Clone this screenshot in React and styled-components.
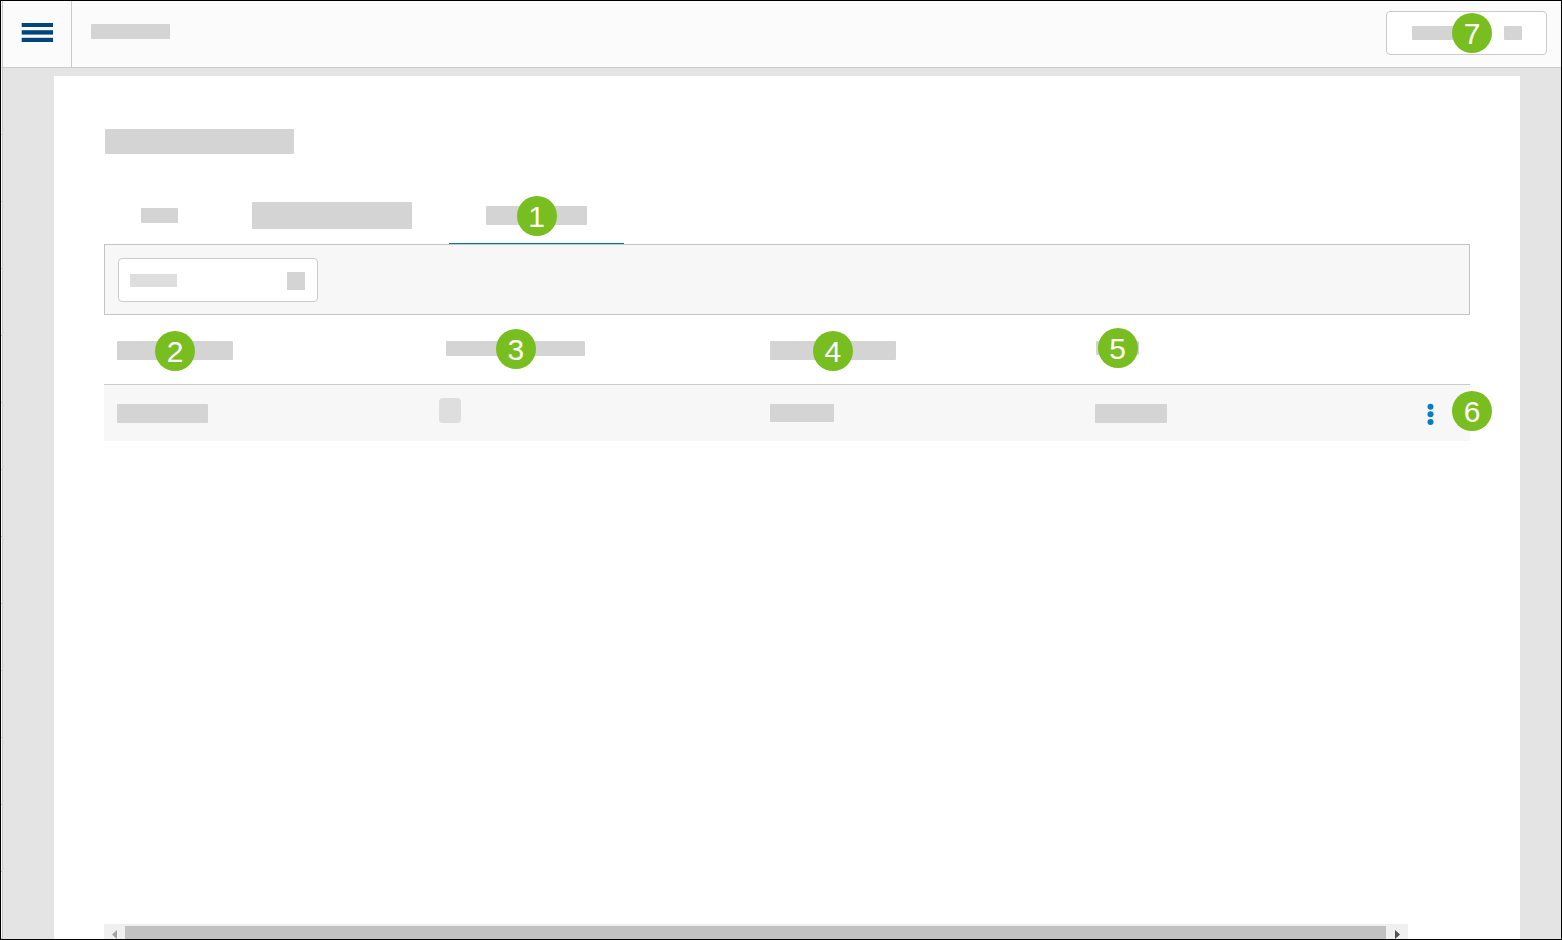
import React from "react";
import styled, { createGlobalStyle, css } from "styled-components";

const GlobalStyle = createGlobalStyle`
  *, *::before, *::after {
    box-sizing: border-box;
  }

  body {
    margin: 0;
    font-family: "Liberation Sans", Arial, sans-serif;
  }

  button {
    font: inherit;
    cursor: pointer;
  }
`

const Frame = styled.div`
  display: flex;
  height: 100vh;
  overflow: hidden;
  border: 1px solid #000;
  background-color: #e4e4e4;
`

const Rail = styled.div`
  flex: none;
  width: 2px;
  border-right: 1px solid #cbc8c7;
  background: repeating-linear-gradient(#f9f9f9 0 66px, #cbcbcb 66px 67px);
`

const Page = styled.div`
  flex: 1;
  min-width: 0;
  display: flex;
  flex-direction: column;
`

const TopBar = styled.header`
  flex: none;
  display: flex;
  align-items: flex-start;
  height: 67px;
  padding-right: 14px;
  border-bottom: 1px solid #cbcbcb;
  background-color: #fbfbfb;
`

const MenuButton = styled.button`
  display: flex;
  align-items: center;
  justify-content: center;
  width: 69px;
  height: 100%;
  padding: 0 0 2px;
  border: 0;
  border-right: 1px solid #cbcbcb;
  background: none;
`

const AppName = styled.div`
  flex: 1;
  padding: 23px 19px 0;
`

const AccountButton = styled.button`
  display: flex;
  align-items: center;
  gap: 32px;
  height: 44px;
  margin-top: 10px;
  padding: 0 24px 0 25px;
  border: 1px solid #cbcbcb;
  border-radius: 4px;
  background-color: #fff;
`

const Placeholder = styled.span`
  display: block;
  position: relative;
  width: ${props => props.$width}px;
  height: ${props => props.$height}px;
  border-radius: 1px;
  background-color: #d4d4d4;
`

const Badge = styled.span`
  position: absolute;
  top: calc(50% - 20px);
  left: calc(50% - 20px);
  width: 40px;
  height: 40px;
  border-radius: 50%;
  background-color: #78be20;
  color: #fff;
  font-size: 30px;
  font-weight: 400;
  line-height: 42px;
  text-align: center;

  ${props => props.$edge && css`
    left: calc(100% - 20px);
  `}

  ${props => props.$outside && css`
    top: 6px;
    left: auto;
    right: -22px;
  `}
`

const Main = styled.main`
  flex: 1;
  min-height: 0;
  display: flex;
  padding: 8px 41px 0 51px;
`

const Panel = styled.section`
  flex: 1;
  min-width: 0;
  display: flex;
  flex-direction: column;
  padding: 53px 50px 0;
  background-color: #fff;
`

const Title = styled.h1`
  margin: 0 0 34px;
  padding-left: 1px;
`

const Tabs = styled.div`
  display: flex;
`

const Tab = styled.button`
  display: flex;
  align-items: center;
  height: 56px;
  padding: 0 37px;
  border: 0;
  border-bottom: 1px solid ${props => props.$selected ? "#0077c0" : "transparent"};
  background: none;
`

const FilterBar = styled.div`
  padding: 13px 13px 12px;
  border: 1px solid #c4c4c4;
  background-color: #f7f7f7;
`

const FilterSelect = styled.select`
  appearance: none;
  display: block;
  width: 200px;
  height: 44px;
  border: 1px solid #cbcbcb;
  border-radius: 4px;
  background-color: #fff;
  background-image: linear-gradient(#dedede, #dedede), linear-gradient(#d4d4d4, #d4d4d4);
  background-position: left 11px top 15px, right 12px top 13px;
  background-size: 47px 13px, 18px 18px;
  background-repeat: no-repeat;
`

const Table = styled.table`
  width: 100%;
  table-layout: fixed;
  border-collapse: separate;
  border-spacing: 0;
`

const Column = styled.col`
  width: ${props => props.$width};
`

const HeadCell = styled.th`
  height: 70px;
  padding: 26px 13px 0;
  border-bottom: 1px solid #cbcbcb;
  vertical-align: top;

  ${props => props.$indent && css`
    padding-left: ${13 + props.$indent}px;
  `}
`

const Cell = styled.td`
  height: 56px;
  padding: ${props => props.$control ? 13 : 19}px 13px 0;
  background-color: #f7f7f7;
  vertical-align: top;
`

const ActionCell = styled(Cell)`
  position: relative;
  padding: 16px 34px 0 0;
`

const Checkbox = styled.input`
  appearance: none;
  display: block;
  width: 22px;
  height: 25px;
  margin: 0;
  border-radius: 4px;
  background-color: #dedede;
`

const RowMenuButton = styled.button`
  display: block;
  margin-left: auto;
  padding: 0;
  border: 0;
  background: none;

  svg {
    display: block;
  }
`

const ScrollBar = styled.div`
  display: flex;
  height: 15px;
  margin: auto 62px 0 0;
  background-color: #f0f0f0;
`

const ScrollArrow = styled.button`
  display: flex;
  flex: none;
  justify-content: ${props => props.$end ? "flex-end" : "flex-start"};
  width: ${props => props.$end ? 22 : 21}px;
  padding: 6px 8px 0;
  border: 0;
  background: none;
`

const ScrollThumb = styled.div`
  flex: 1;
  margin-top: 2px;
  background-color: #c1c1c1;
`

const columns = [
    { width: "23.6%", block: [116, 19], badge: 2 },
    { width: "24.2%", block: [139, 15], badge: 3, indent: 7 },
    { width: "23.8%", block: [126, 19], badge: 4 },
    { width: "auto", block: [43, 14], badge: 5, indent: 1 },
];

const Block = ({ size, children }) => (
    <Placeholder $width={size[0]} $height={size[1]}>{children}</Placeholder>
);

const MenuIcon = () => (
    <svg width="32" height="20" viewBox="0 0 32 20" fill="#00457c" aria-hidden="true">
        <rect x="0.7" y="0" width="31.3" height="4" />
        <rect x="0.7" y="7.2" width="31.3" height="4.4" />
        <rect x="0.7" y="14.8" width="31.3" height="4.2" />
    </svg>
);

const DotsIcon = () => (
    <svg width="11" height="26" viewBox="0 0 11 26" fill="#0a7cc1" aria-hidden="true">
        <circle cx="5.5" cy="5.7" r="3" />
        <circle cx="5.5" cy="13.3" r="3" />
        <circle cx="5.5" cy="21" r="3" />
    </svg>
);

const Header = () => (
    <TopBar>
        <MenuButton aria-label="Menu"><MenuIcon /></MenuButton>
        <AppName><Block size={[79, 15]} /></AppName>
        <AccountButton aria-label="Account">
            <Block size={[60, 14]}><Badge $edge>7</Badge></Block>
            <Block size={[18, 14]} />
        </AccountButton>
    </TopBar>
);

const DataTable = () => (
    <Table>
        <colgroup>
            {columns.map(column => <Column key={column.badge} $width={column.width} />)}
            <Column $width="60px" />
        </colgroup>
        <thead>
            <tr>
                {columns.map(column => (
                    <HeadCell key={column.badge} scope="col" $indent={column.indent}>
                        <Block size={column.block}><Badge>{column.badge}</Badge></Block>
                    </HeadCell>
                ))}
                <HeadCell as="td" />
            </tr>
        </thead>
        <tbody>
            <tr>
                <Cell><Block size={[91, 19]} /></Cell>
                <Cell $control><Checkbox type="checkbox" aria-label="Select row" /></Cell>
                <Cell><Block size={[64, 18]} /></Cell>
                <Cell><Block size={[72, 19]} /></Cell>
                <ActionCell>
                    <RowMenuButton aria-label="Row actions"><DotsIcon /></RowMenuButton>
                    <Badge $outside>6</Badge>
                </ActionCell>
            </tr>
        </tbody>
    </Table>
);

const HorizontalScroll = () => (
    <ScrollBar>
        <ScrollArrow aria-label="Scroll left">
            <svg width="5" height="9" viewBox="0 0 5 9" fill="#a3a3a3"><path d="M5 0v9L0 4.5z" /></svg>
        </ScrollArrow>
        <ScrollThumb />
        <ScrollArrow $end aria-label="Scroll right">
            <svg width="5" height="9" viewBox="0 0 5 9" fill="#505050"><path d="M0 0v9L5 4.5z" /></svg>
        </ScrollArrow>
    </ScrollBar>
);

export default function App() {
    return (
        <>
            <GlobalStyle />
            <Frame>
                <Rail />
                <Page>
                    <Header />
                    <Main>
                        <Panel>
                            <Title><Block size={[189, 25]} /></Title>
                            <Tabs role="tablist">
                                <Tab role="tab" aria-label="First tab"><Block size={[37, 15]} /></Tab>
                                <Tab role="tab" aria-label="Second tab"><Block size={[160, 27]} /></Tab>
                                <Tab role="tab" aria-label="Third tab" aria-selected="true" $selected>
                                    <Block size={[101, 19]}><Badge>1</Badge></Block>
                                </Tab>
                            </Tabs>
                            <FilterBar>
                                <FilterSelect aria-label="Filter" />
                            </FilterBar>
                            <DataTable />
                            <HorizontalScroll />
                        </Panel>
                    </Main>
                </Page>
            </Frame>
        </>
    );
}
